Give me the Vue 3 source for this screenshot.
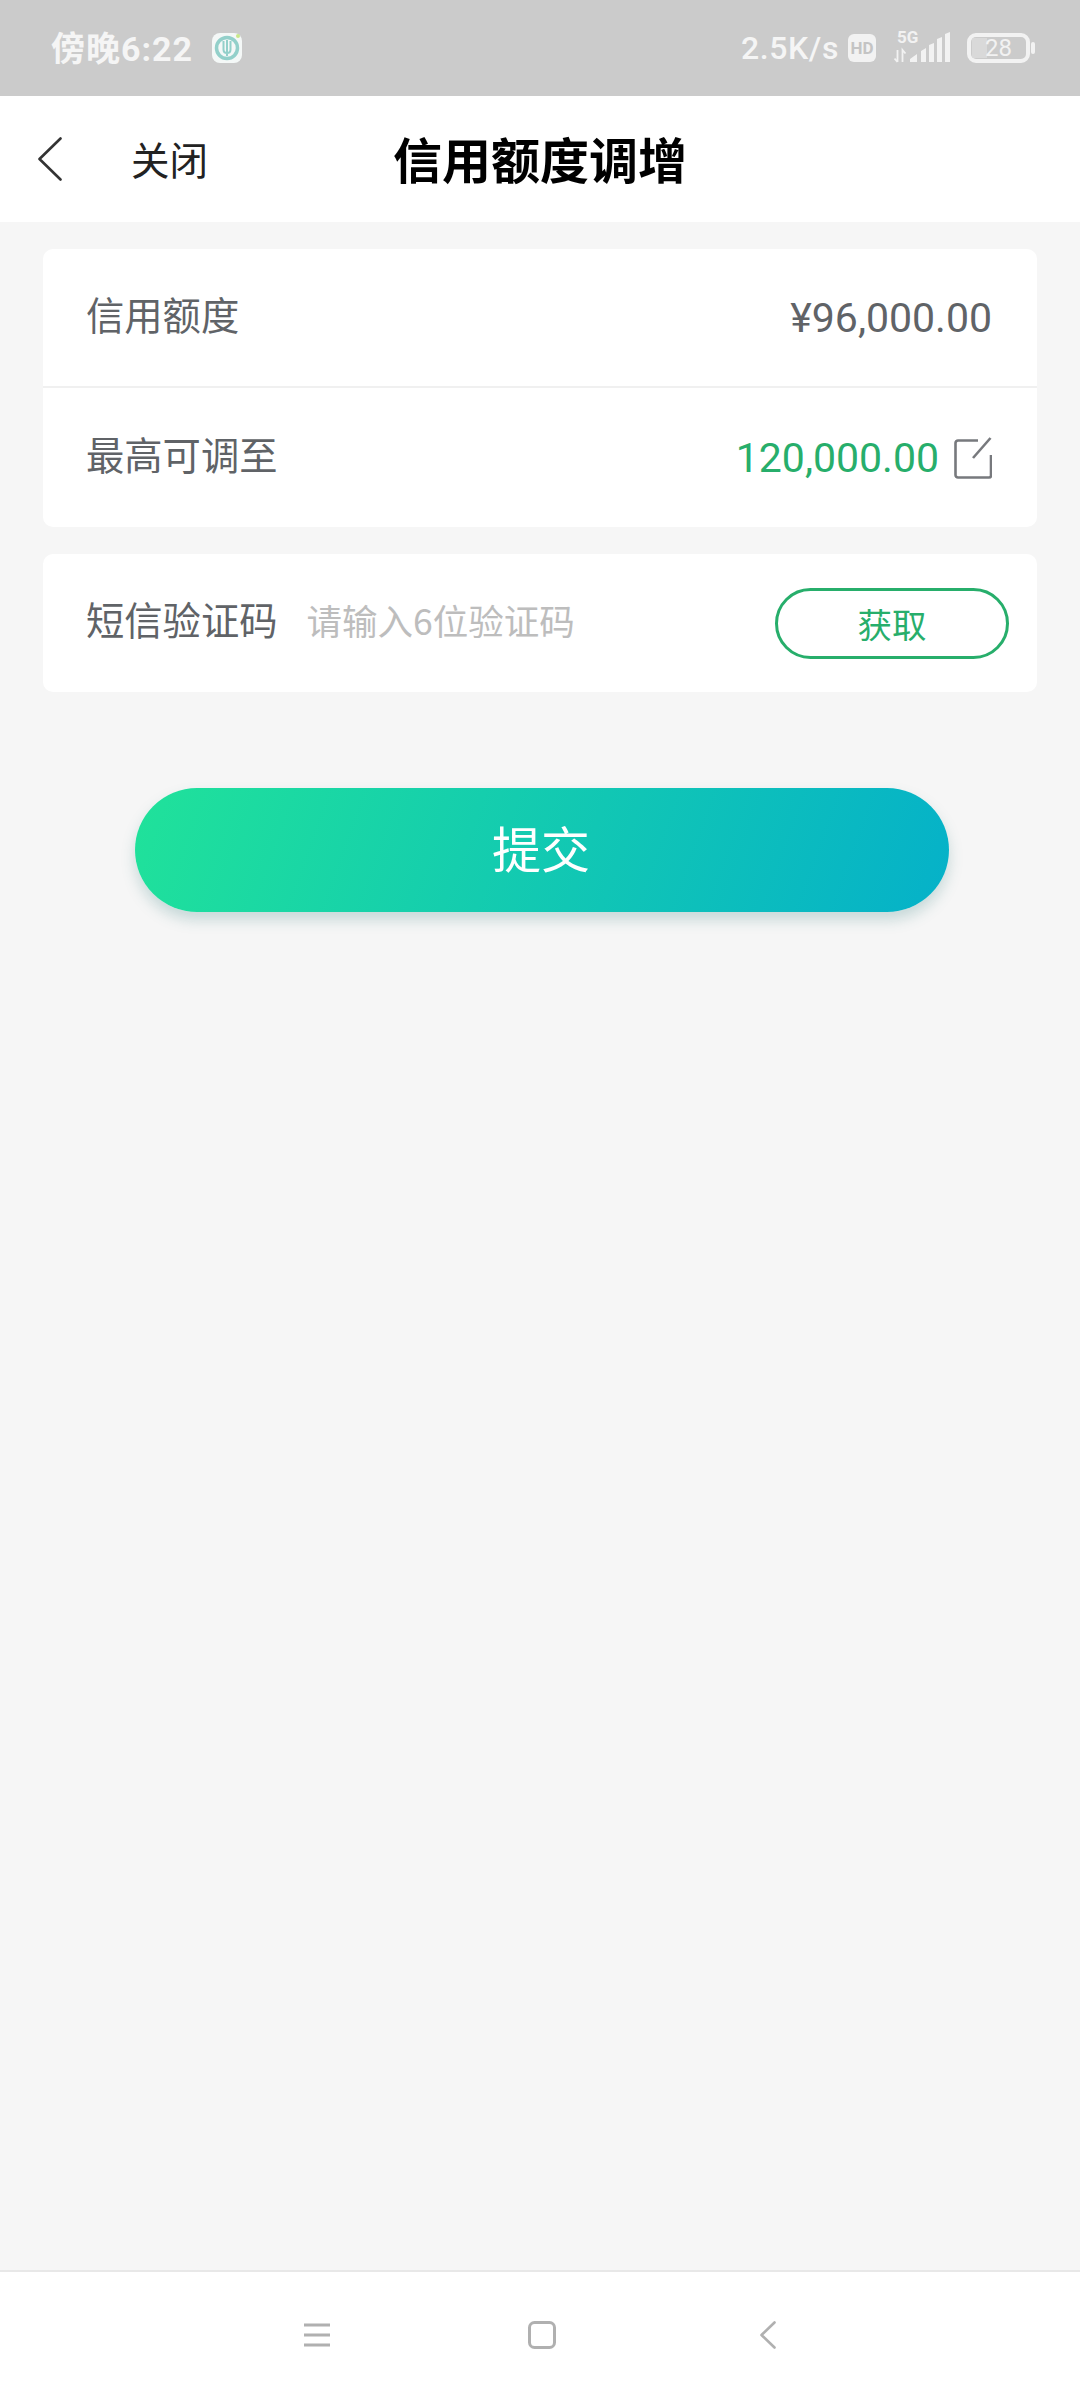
<template>
  <div class="page">
    <!-- Status bar -->
    <div class="status-bar">
      <div class="status-left">
        <span class="time">傍晚6:22</span>
        <svg class="bank-icon" width="30" height="30" viewBox="0 0 30 30">
          <rect width="30" height="30" rx="8" fill="#f4f8f7" />
          <circle cx="15" cy="15" r="10.5" fill="none" stroke="#93d0ca" stroke-width="3.500" />
          <path d="M11.5 8v8.5c0 2 1.5 3.500 3.500 3.500s3.500-1.500 3.500-3.500V8M15 7v16" fill="none" stroke="#93d0ca" stroke-width="2" />
          <circle cx="26" cy="3" r="2" fill="#c8e88a" />
        </svg>
      </div>
      <div class="status-right">
        <span class="speed">2.5K/s</span>
        <span class="hd">HD</span>
        <svg class="signal" width="58" height="48" viewBox="0 -8 58 48">
          <text x="3" y="11" class="five-g">5G</text>
          <path d="M3.500 18v12M0.500 26.500l3 3.500M8.500 30V18l3 3.500" fill="none" stroke="#f2f2f2" stroke-width="1.800" />
          <path d="M16 30v-3l7-5v8zM27 30V19l5-3v14zM35 30V13l5-2v19zM43 30V7l5-2v25zM51 30V2l5-2v30z" fill="#f2f2f2" />
        </svg>
        <div class="battery">
          <div class="battery-body">
            <div class="battery-fill" :style="{ width: level + '%' }"></div>
            <span class="battery-text">{{ level }}</span>
          </div>
          <div class="battery-tip"></div>
        </div>
      </div>
    </div>

    <!-- Header -->
    <header class="nav-bar">
      <div class="nav-left">
        <svg class="nav-back" width="24" height="44" viewBox="0 0 24 44">
          <polyline points="22.500,1.500 1.500,22 22.500,42.500" fill="none" stroke="#333" stroke-width="2.600" stroke-linecap="round" stroke-linejoin="round" />
        </svg>
        <span class="nav-close">关闭</span>
      </div>
      <h1 class="nav-title">信用额度调增</h1>
      <div></div>
    </header>

    <!-- Content -->
    <main class="content">
      <section class="card">
        <div class="row row-divided">
          <span class="label">信用额度</span>
          <span class="value">¥96,000.00</span>
        </div>
        <div class="row">
          <span class="label">最高可调至</span>
          <div class="value-edit">
            <span class="value value-green">120,000.00</span>
            <svg class="edit-icon" width="38" height="42" viewBox="0 0 38 42">
              <path d="M24 3.500H4a2.500 2.500 0 0 0-2.500 2.500v32a2.500 2.500 0 0 0 2.500 2.500h31a2 2 0 0 0 2-2V18" fill="none" stroke="#77797d" stroke-width="2.600" />
              <path d="M19 21 36.500 1" fill="none" stroke="#77797d" stroke-width="2.600" />
            </svg>
          </div>
        </div>
      </section>

      <section class="card card-sms">
        <div class="row row-sms">
          <span class="label">短信验证码</span>
          <span class="placeholder">请输入6位验证码</span>
          <button class="get-btn">获取</button>
        </div>
      </section>

      <button class="submit-btn"><span class="submit-text">提交</span></button>
    </main>

    <!-- Navigation bar -->
    <footer class="sys-nav">
      <svg width="28" height="24" viewBox="0 0 28 24">
        <path d="M1 2h26M1 12h26M1 22h26" stroke="#b0b0b0" stroke-width="3" fill="none" />
      </svg>
      <svg class="nav-home" width="28" height="28" viewBox="0 0 28 28">
        <rect x="1.500" y="1.500" width="25" height="25" rx="5" fill="none" stroke="#b0b0b0" stroke-width="3" />
      </svg>
      <svg class="nav-return" width="16" height="28" viewBox="0 0 16 28">
        <polyline points="14.500,1.500 1.500,14 14.500,26.500" fill="none" stroke="#b0b0b0" stroke-width="2.600" stroke-linecap="round" stroke-linejoin="round" />
      </svg>
    </footer>
  </div>
</template>

<script setup>
const level = 28;
</script>

<style>
html, body {
  margin: 0;
  background: #f6f6f6;
}
</style>

<style scoped>
.page {
  width: 1080px;
  height: 2400px;
  display: flex;
  flex-direction: column;
  background: #f6f6f6;
  font-family: "Noto Sans CJK SC", Roboto, sans-serif;
}

.status-bar {
  height: 96px;
  box-sizing: border-box;
  padding: 0 45px 0 51px;
  display: flex;
  align-items: center;
  justify-content: space-between;
  background: #cbcbcb;
  color: #f5f5f5;
}

.status-left,
.status-right {
  display: flex;
  align-items: center;
}

.time {
  margin-top: 1px;
  font-family: Roboto, "Noto Sans CJK SC", sans-serif;
  font-size: 34px;
  font-weight: 700;
  letter-spacing: 1px;
  line-height: 40px;
}

.bank-icon {
  margin-left: 19px;
}

.speed {
  font-family: Roboto, sans-serif;
  font-size: 32px;
  font-weight: 500;
  letter-spacing: 0.6px;
}

.hd {
  width: 28px;
  height: 28px;
  margin-left: 9px;
  border-radius: 6px;
  background: #f2f2f2;
  color: #c4c4c4;
  font-family: Roboto, sans-serif;
  font-size: 17px;
  font-weight: 700;
  line-height: 28px;
  text-align: center;
}

.signal {
  margin-left: 18px;
}

.five-g {
  font-family: Roboto, sans-serif;
  font-size: 17px;
  font-weight: 700;
  fill: #f2f2f2;
}

.battery {
  display: flex;
  align-items: center;
  margin-left: 15px;
}

.battery-body {
  position: relative;
  width: 63px;
  height: 30px;
  box-sizing: border-box;
  border: 4px solid #f2f2f2;
  border-radius: 9px;
  display: flex;
  align-items: center;
  justify-content: center;
  overflow: hidden;
}

.battery-fill {
  position: absolute;
  top: 1px;
  bottom: 1px;
  left: 1px;
  background: #d9d9d9;
}

.battery-text {
  position: relative;
  font-family: Roboto, sans-serif;
  font-size: 24px;
  line-height: 22px;
  color: #f2f2f2;
}

.battery-tip {
  width: 4px;
  height: 12px;
  margin-left: 1px;
  border-radius: 2px;
  background: #f2f2f2;
}

.nav-bar {
  height: 126px;
  display: grid;
  grid-template-columns: 1fr auto 1fr;
  align-items: center;
  background: #fff;
}

.nav-left {
  display: flex;
  align-items: center;
  padding-left: 38px;
}

.nav-close {
  margin: 0 0 3px 69px;
  color: #222;
  font-size: 38.5px;
  line-height: 44px;
}

.nav-title {
  margin: 0 0 3px;
  color: #000;
  font-size: 49px;
  font-weight: 700;
  line-height: 60px;
}

.content {
  flex: 1;
  display: flex;
  flex-direction: column;
  padding: 27px 43px 0;
}

.card {
  background: #fff;
  border-radius: 10px;
}

.card-sms {
  margin-top: 27px;
}

.row {
  height: 139px;
  box-sizing: border-box;
  padding: 0 45px 0 43px;
  display: flex;
  align-items: center;
  justify-content: space-between;
}

.row-divided {
  border-bottom: 2px solid #f0f0f0;
}

.row-sms {
  height: 138px;
  justify-content: flex-start;
  padding-right: 28px;
}

.label {
  margin-bottom: 8px;
  color: #606367;
  font-size: 38.3px;
  line-height: 44px;
}

.value {
  color: #606367;
  font-family: Roboto, sans-serif;
  font-size: 41px;
  line-height: 44px;
}

.value-green {
  color: #27ae6b;
}

.value-edit {
  display: flex;
  align-items: center;
}

.edit-icon {
  margin-left: 15px;
}

.placeholder {
  margin: 0 0 6px 29px;
  color: #bdbdbd;
  font-size: 35.5px;
  line-height: 44px;
}

.get-btn {
  width: 234px;
  height: 71px;
  margin-left: auto;
  padding: 0;
  border: 3px solid #27ae6b;
  border-radius: 36px;
  background: #fff;
  color: #27ae6b;
  font-family: inherit;
  font-size: 34.5px;
}

.submit-btn {
  align-self: flex-start;
  width: 814px;
  height: 124px;
  margin: 96px 0 0 92px;
  padding: 0;
  border: none;
  border-radius: 62px;
  background: linear-gradient(110deg, #20e29a, #05b1c9);
  box-shadow: 0 8px 14px rgba(60, 130, 130, 0.25);
  color: #fff;
  font-family: inherit;
  font-size: 49px;
}

.submit-text {
  position: relative;
  top: -4px;
  left: -1px;
}

.sys-nav {
  height: 130px;
  box-sizing: border-box;
  border-top: 2px solid #e8e8e8;
  display: flex;
  align-items: center;
  padding: 0 0 2px 303px;
  background: #fff;
}

.nav-home {
  margin-left: 197px;
}

.nav-return {
  margin-left: 204px;
}
</style>
